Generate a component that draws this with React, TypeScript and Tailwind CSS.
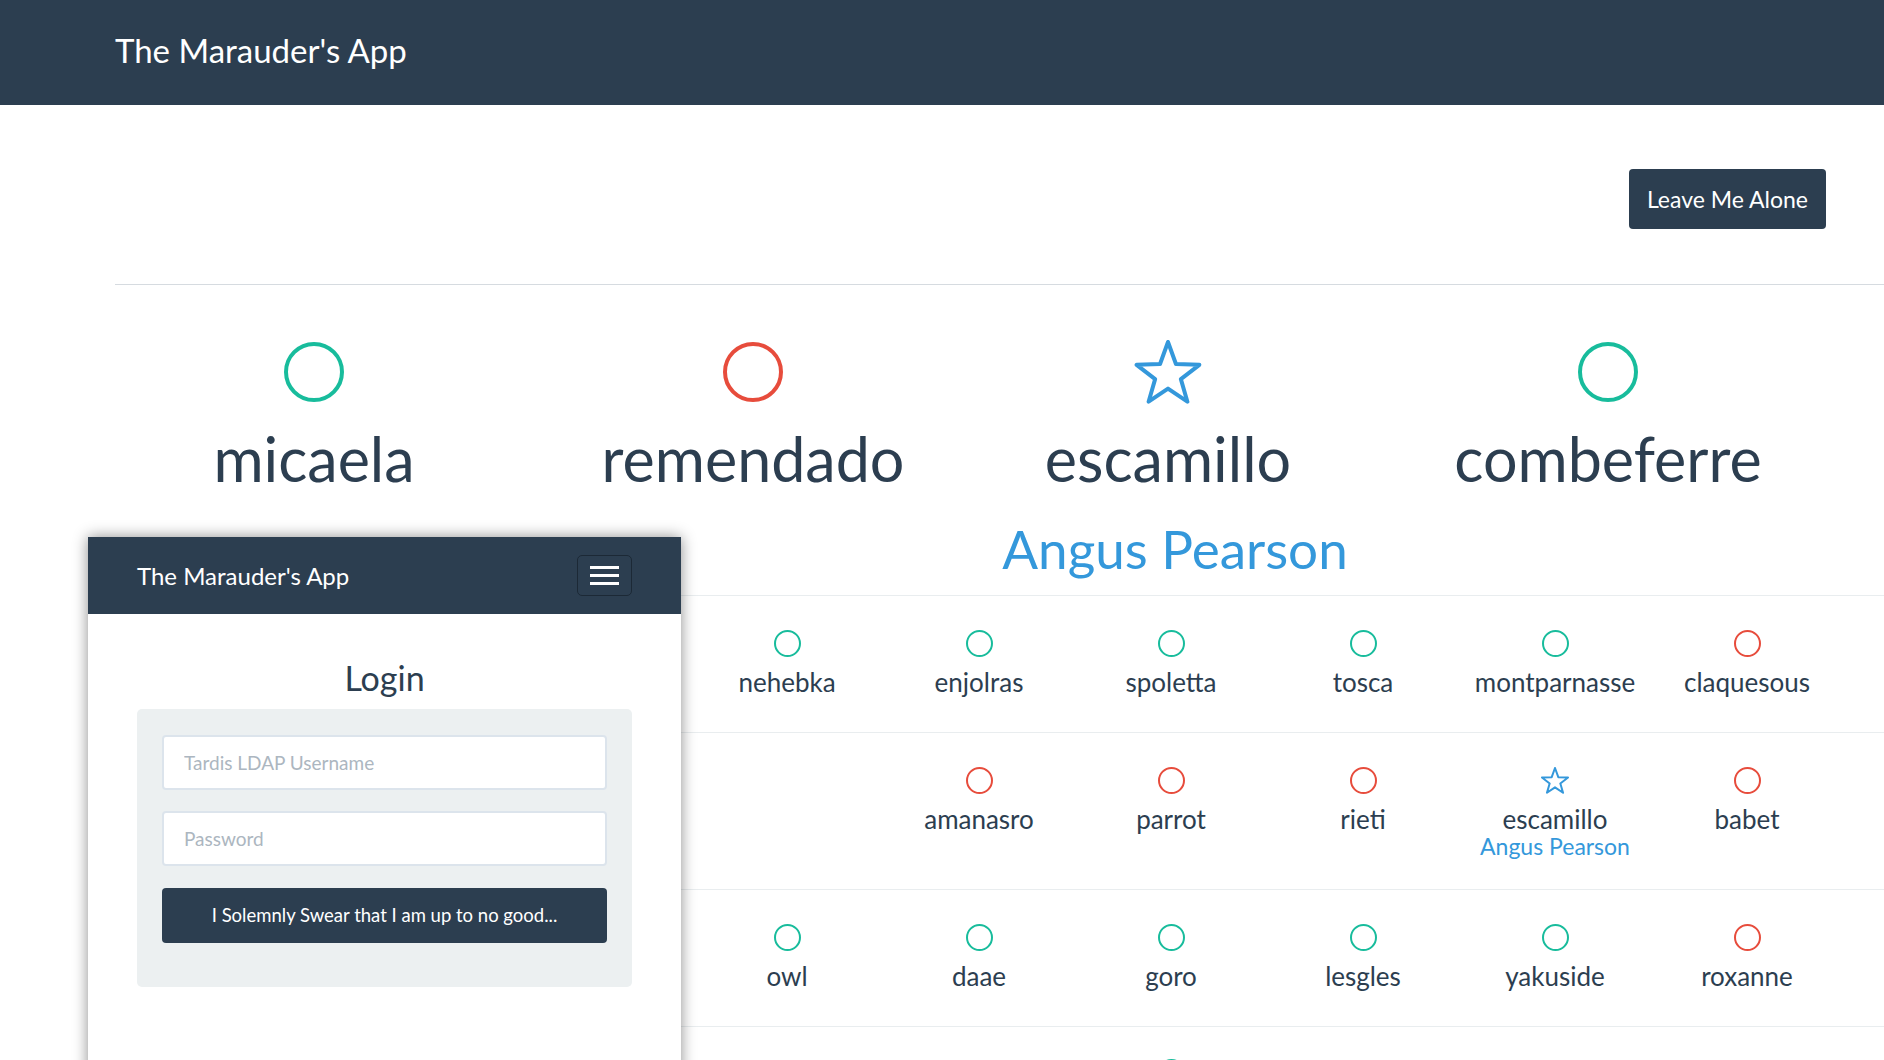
import React from 'react';

type Status = 'in' | 'out' | 'star';

const COLORS: Record<Status, string> = {
  in: '#18bc9c',
  out: '#e74c3c',
  star: '#3498db',
};

const starPoints = (R: number, r: number, cx: number, cy: number) => {
  const pts: string[] = [];
  for (let k = 0; k < 10; k++) {
    const rad = k % 2 === 0 ? R : r;
    const a = ((-90 + k * 36) * Math.PI) / 180;
    pts.push(`${(cx + rad * Math.cos(a)).toFixed(2)},${(cy + rad * Math.sin(a)).toFixed(2)}`);
  }
  return pts.join(' ');
};

const StatusIcon: React.FC<{ status: Status; big?: boolean }> = ({ status, big }) => {
  const color = COLORS[status];
  if (status === 'star') {
    const R = big ? 33 : 13.7;
    const sw = big ? 4 : 2;
    const w = big ? 68 : 28;
    const h = big ? 64 : 27;
    return (
      <svg width={w} height={h} viewBox={`0 0 ${w} ${h}`}>
        <polygon
          points={starPoints(R, R * 0.41, w / 2, R + sw / 2)}
          fill="none"
          stroke={color}
          strokeWidth={sw}
          strokeLinejoin="round"
        />
      </svg>
    );
  }
  const size = big ? 60 : 27;
  const sw = big ? 4 : 2;
  return (
    <svg width={size} height={size} viewBox={`0 0 ${size} ${size}`}>
      <circle cx={size / 2} cy={size / 2} r={size / 2 - sw / 2} fill="none" stroke={color} strokeWidth={sw} />
    </svg>
  );
};

type Person = { name: string; status: Status; owner?: string } | null;

const bigRow: Person[] = [
  { name: 'micaela', status: 'in' },
  { name: 'remendado', status: 'out' },
  { name: 'escamillo', status: 'star', owner: 'Angus Pearson' },
  { name: 'combeferre', status: 'in' },
];

// first three columns sit under the login preview
const rows: Person[][] = [
  [
    null,
    null,
    null,
    { name: 'nehebka', status: 'in' },
    { name: 'enjolras', status: 'in' },
    { name: 'spoletta', status: 'in' },
    { name: 'tosca', status: 'in' },
    { name: 'montparnasse', status: 'in' },
    { name: 'claquesous', status: 'out' },
  ],
  [
    null,
    null,
    null,
    null,
    { name: 'amanasro', status: 'out' },
    { name: 'parrot', status: 'out' },
    { name: 'rieti', status: 'out' },
    { name: 'escamillo', status: 'star', owner: 'Angus Pearson' },
    { name: 'babet', status: 'out' },
  ],
  [
    null,
    null,
    null,
    { name: 'owl', status: 'in' },
    { name: 'daae', status: 'in' },
    { name: 'goro', status: 'in' },
    { name: 'lesgles', status: 'in' },
    { name: 'yakuside', status: 'in' },
    { name: 'roxanne', status: 'out' },
  ],
  [null, null, null, null, null, { name: '', status: 'in' }, null, null, null],
];

const rowHeights = ['h-[137px]', 'h-[157px]', 'h-[137px]', 'h-[137px]'];

export default function App() {
  return (
    <div className="relative w-full h-[1060px] overflow-hidden bg-white text-[#2c3e50] font-['Lato',sans-serif]">
      {/* Navbar */}
      <header className="h-[105px] bg-[#2c3e50] flex items-center pl-[115px] pb-[5px]">
        <span className="text-white text-[33px] leading-none">The Marauder's App</span>
      </header>

      {/* Toolbar */}
      <div className="h-[179px] flex justify-end items-start pt-[64px] pr-[58px]">
        <button className="h-[60px] px-[18px] rounded-[4px] bg-[#2c3e50] text-white text-[23px] leading-none">
          Leave Me Alone
        </button>
      </div>

      <div className="ml-[115px] border-t border-[#d6dbe0]" />

      {/* Featured row */}
      <div className="ml-[94px] h-[310px] grid grid-cols-[440px_438px_392px_488px] pt-[57px]">
        {bigRow.map((p) =>
          p ? (
            <div key={p.name} className="flex flex-col items-center">
              <div className="h-[60px] flex items-center justify-center">
                <StatusIcon status={p.status} big />
              </div>
              <div className="mt-[26px] text-[61px] leading-none">{p.name}</div>
              {p.owner && (
                <div className="mt-[33px] pl-[14px] text-[53px] leading-none text-[#3498db] whitespace-nowrap">
                  {p.owner}
                </div>
              )}
            </div>
          ) : null
        )}
      </div>

      {/* Grid of everyone else */}
      <div className="ml-[115px] border-t border-[#e9edef]">
        {rows.map((row, i) => (
          <div key={i} className={`grid grid-cols-[repeat(9,192px)] border-b border-[#e9edef] ${rowHeights[i]} ${i === 3 ? 'pt-[32px]' : 'pt-[34px]'}`}>
            {row.map((p, j) =>
              p ? (
                <div key={j} className="flex flex-col items-center">
                  <div className="h-[27px] flex items-center justify-center">
                    <StatusIcon status={p.status} />
                  </div>
                  {p.name && <div className="mt-[12px] text-[26px] leading-none whitespace-nowrap">{p.name}</div>}
                  {p.owner && (
                    <div className="mt-[3px] text-[23px] leading-none text-[#3498db] whitespace-nowrap">{p.owner}</div>
                  )}
                </div>
              ) : (
                <div key={j} />
              )
            )}
          </div>
        ))}
      </div>

      {/* Mobile login preview */}
      <div className="absolute left-[88px] top-[537px] w-[593px] h-[560px] bg-white shadow-[0_0_14px_rgba(0,0,0,0.45)]">
        <div className="h-[77px] bg-[#2c3e50] flex items-center justify-between pl-[49px] pr-[49px]">
          <span className="text-white text-[24px] leading-none">The Marauder's App</span>
          <button className="w-[55px] h-[41px] rounded-[5px] border border-[#1c2936] flex flex-col items-center justify-center gap-[5px]">
            <span className="block w-[29px] h-[3px] bg-white" />
            <span className="block w-[29px] h-[3px] bg-white" />
            <span className="block w-[29px] h-[3px] bg-white" />
          </button>
        </div>
        <h2 className="mt-[47px] text-center text-[34px] leading-none">Login</h2>
        <div className="mx-[49px] mt-[14px] rounded-[5px] bg-[#ecf0f1] px-[25px] pt-[26px] pb-[44px]">
          <input
            className="block w-full h-[55px] rounded-[4px] border-2 border-[#dce4ec] bg-white pl-[20px] text-[19px] placeholder:text-[#acb6c0] outline-none"
            placeholder="Tardis LDAP Username"
          />
          <input
            type="password"
            className="mt-[21px] block w-full h-[55px] rounded-[4px] border-2 border-[#dce4ec] bg-white pl-[20px] text-[19px] placeholder:text-[#acb6c0] outline-none"
            placeholder="Password"
          />
          <button className="mt-[22px] block w-full h-[55px] rounded-[4px] bg-[#2c3e50] text-white text-[18.5px]">
            I Solemnly Swear that I am up to no good...
          </button>
        </div>
      </div>
    </div>
  );
}
